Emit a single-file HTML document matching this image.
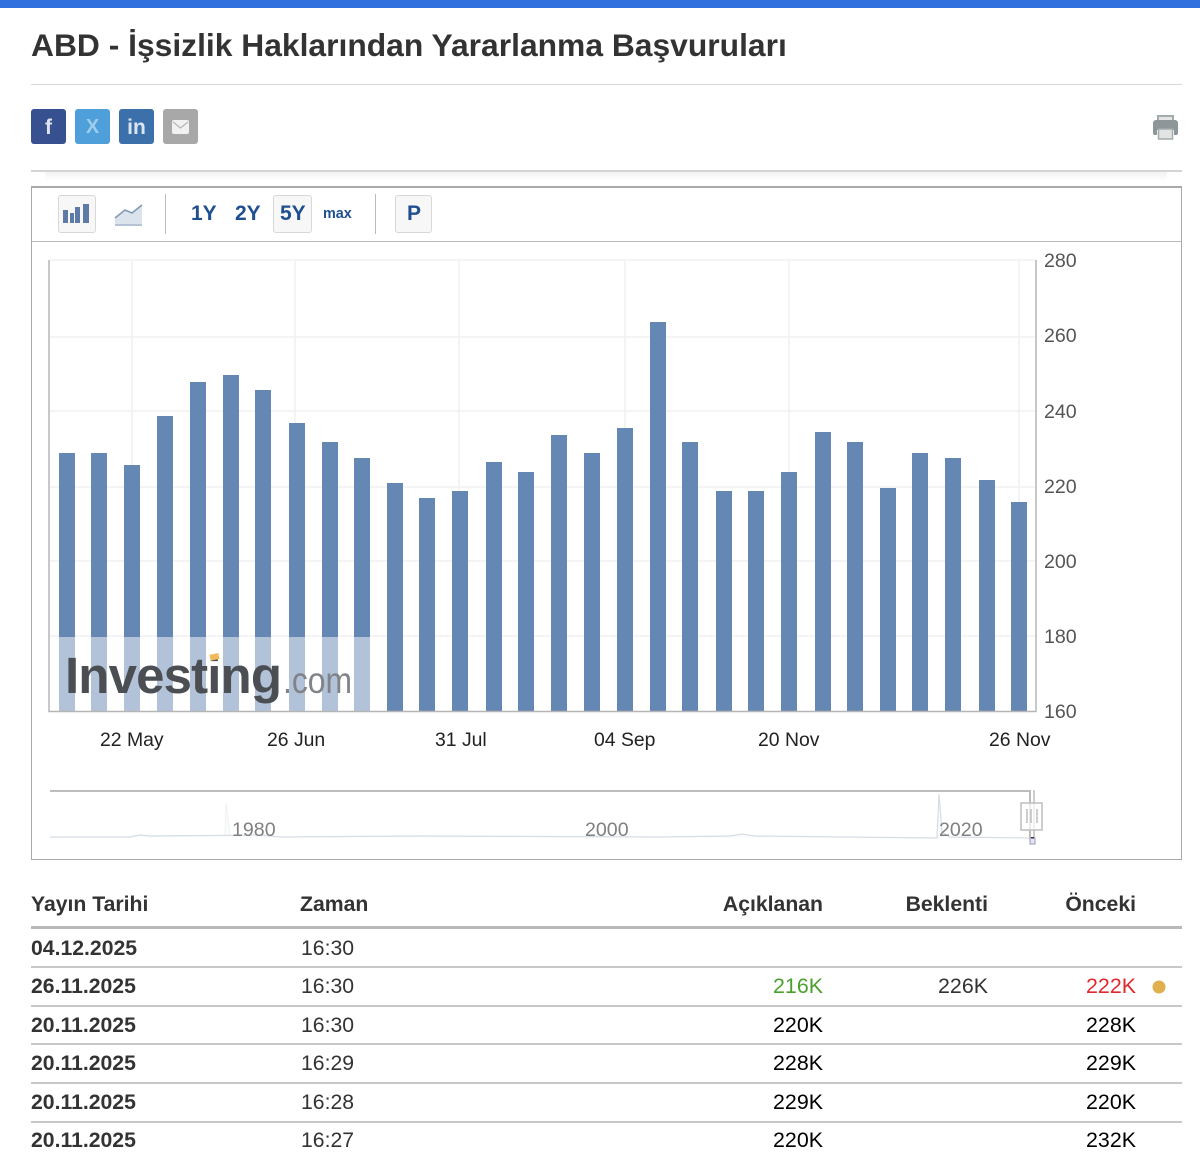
<!DOCTYPE html>
<html lang="tr">
<head>
<meta charset="utf-8">
<title>ABD - İşsizlik Hakları</title>
<style>
html,body{margin:0;padding:0;background:#fff}
body{width:1200px;height:1166px;position:relative;overflow:hidden;font-family:"Liberation Sans",sans-serif;color:#333}
.a{position:absolute;white-space:nowrap}
svg{position:absolute;left:0;top:0}
.d{left:31px;font-weight:bold;font-size:21.2px;line-height:26px;color:#333;margin-top:1px}
.t{left:301px;font-size:21.2px;line-height:26px;color:#333;margin-top:1px}
.r{font-size:21.4px;line-height:26px;text-align:right;color:#000}
.h{font-weight:bold;font-size:21.2px;line-height:26px;color:#333;margin-top:1px}
.ln{position:absolute;left:31px;width:1151px;height:2px;background:#c8c8c8}
.y{left:1044px;font-size:19.6px;line-height:22px;color:#555}
.x{font-size:19.4px;line-height:22px;color:#222}
.tb{font-weight:bold;color:#1f4f8f;font-size:21px;line-height:26px}
.btn{position:absolute;box-sizing:border-box;background:#f7f7f7;border:1px solid #d8d8d8;border-radius:3px}
.soc{position:absolute;top:109px;width:35px;height:35px;border-radius:3px}
</style>
</head>
<body>
<div class="a" style="left:0;top:0;width:1200px;height:8px;background:#2f6fde"></div>
<div class="a" style="left:31px;top:25px;font-size:31.8px;line-height:40px;font-weight:bold;color:#333">ABD - İşsizlik Haklarından Yararlanma Başvuruları</div>
<div class="a" style="left:31px;top:84px;width:1151px;height:1px;background:#d8d8d8"></div>

<div class="soc" style="left:31px;background:#37508f"></div>
<div class="soc" style="left:75px;background:#4f9fdb"></div>
<div class="soc" style="left:119px;background:#3b70aa"></div>
<div class="soc" style="left:163px;background:#a8a8a8"></div>
<div class="a" style="left:31px;top:109px;width:35px;text-align:center;font-size:21px;line-height:38px;font-weight:bold;color:#dfe4f0">f</div>
<div class="a" style="left:75px;top:109px;width:35px;text-align:center;font-size:20px;line-height:37px;font-weight:bold;color:#9fcdee">X</div>
<div class="a" style="left:119px;top:109px;width:35px;text-align:center;font-size:21px;line-height:38px;font-weight:bold;color:#dbe6f2">in</div>

<div class="a" style="left:31px;top:170px;width:1151px;height:2px;background:#d4d4d4"></div>
<div class="a" style="left:45px;top:172px;width:1122px;height:9px;background:linear-gradient(#f2f2f2,#fff)"></div>

<div class="a" style="left:31px;top:186px;width:1149px;height:671px;border:1px solid #aaa;border-top:2px solid #aaa"></div>
<div class="a" style="left:32px;top:241px;width:1149px;height:1px;background:#bbb"></div>

<div class="btn" style="left:58px;top:195px;width:38px;height:38px"></div>
<div class="btn" style="left:273px;top:195px;width:39px;height:38px"></div>
<div class="btn" style="left:395px;top:195px;width:37px;height:38px"></div>
<div class="a" style="left:165px;top:194px;width:1px;height:40px;background:#bbb"></div>
<div class="a" style="left:375px;top:194px;width:1px;height:40px;background:#bbb"></div>

<div class="a tb" style="left:191px;top:201px">1Y</div>
<div class="a tb" style="left:235px;top:201px">2Y</div>
<div class="a tb" style="left:280px;top:201px">5Y</div>
<div class="a" style="left:323px;top:205px;font-size:14.4px;line-height:18px;font-weight:bold;color:#1f4f8f">max</div>
<div class="a tb" style="left:407px;top:201px">P</div>

<svg width="1200" height="1166" viewBox="0 0 1200 1166">
  <!-- envelope -->
  <rect x="172" y="120" width="17" height="14" rx="2" fill="#f1f1f1"/>
  <path d="M173 122 L180.500 128 L188 122" fill="none" stroke="#b5b5b5" stroke-width="1.200"/>
  <!-- printer -->
  <rect x="1158" y="116" width="15" height="8" fill="#e4e6e6" stroke="#a3abad" stroke-width="2"/>
  <path d="M1153 123a3 3 0 0 1 3-3h19a3 3 0 0 1 3 3v10a2 2 0 0 1-2 2h-2v-5h-17v5h-2a2 2 0 0 1-2-2z" fill="#8d9699"/>
  <rect x="1158.500" y="129" width="14" height="10" fill="#e2e4e4" stroke="#a3abad" stroke-width="1.500"/>
  <!-- bar icon -->
  <g fill="#5c7ba6">
    <rect x="63" y="210" width="5" height="13"/>
    <rect x="70" y="213" width="4" height="10"/>
    <rect x="75" y="207" width="5" height="16"/>
    <rect x="83" y="204" width="6" height="19"/>
  </g>
  <!-- line icon -->
  <path d="M115 218 L125 210 L132 213 L142 205 V226 H115 Z" fill="#dbe3ec"/>
  <path d="M115 218 L125 210 L132 213 L142 205" fill="none" stroke="#7f97b5" stroke-width="1.500"/>
  <rect x="115" y="224" width="27" height="2" fill="#b4c3d5"/>

  <!-- gridlines -->
  <g stroke="#f0f1f3" stroke-width="1.500" fill="none">
    <path d="M50 260H1036M50 337H1036M50 411H1036M50 487H1036M50 561H1036M50 636H1036"/>
    <path d="M132 260V711M295 260V711M459 260V711M625 260V711M789 260V711M1019 260V711"/>
  </g>
  <!-- bars -->
  <g fill="#6587b3">
    <rect x="59" y="453" width="16" height="258"/>
    <rect x="91" y="453" width="16" height="258"/>
    <rect x="124" y="465" width="16" height="246"/>
    <rect x="157" y="416" width="16" height="295"/>
    <rect x="190" y="382" width="16" height="329"/>
    <rect x="223" y="375" width="16" height="336"/>
    <rect x="255" y="390" width="16" height="321"/>
    <rect x="289" y="423" width="16" height="288"/>
    <rect x="322" y="442" width="16" height="269"/>
    <rect x="354" y="458" width="16" height="253"/>
    <rect x="387" y="483" width="16" height="228"/>
    <rect x="419" y="498" width="16" height="213"/>
    <rect x="452" y="491" width="16" height="220"/>
    <rect x="486" y="462" width="16" height="249"/>
    <rect x="518" y="472" width="16" height="239"/>
    <rect x="551" y="435" width="16" height="276"/>
    <rect x="584" y="453" width="16" height="258"/>
    <rect x="617" y="428" width="16" height="283"/>
    <rect x="650" y="322" width="16" height="389"/>
    <rect x="682" y="442" width="16" height="269"/>
    <rect x="716" y="491" width="16" height="220"/>
    <rect x="748" y="491" width="16" height="220"/>
    <rect x="781" y="472" width="16" height="239"/>
    <rect x="815" y="432" width="16" height="279"/>
    <rect x="847" y="442" width="16" height="269"/>
    <rect x="880" y="488" width="16" height="223"/>
    <rect x="912" y="453" width="16" height="258"/>
    <rect x="945" y="458" width="16" height="253"/>
    <rect x="979" y="480" width="16" height="231"/>
    <rect x="1011" y="502" width="16" height="209"/>
  </g>
  <rect x="50" y="637" width="337" height="74" fill="#fff" fill-opacity=".5"/>
  <!-- axes -->
  <path d="M49 260V711.500H1036V260" fill="none" stroke="#b5b5b5" stroke-width="1.500"/>

  <!-- watermark -->
  <text x="65" y="693" font-family="Liberation Sans" font-size="51" font-weight="bold" fill="#4b4e52" textLength="217" lengthAdjust="spacing">Investing</text>
  <text x="283" y="693" font-family="Liberation Sans" font-size="37" fill="#808387" textLength="69" lengthAdjust="spacingAndGlyphs">.com</text>
  <rect x="210" y="654" width="9" height="6" fill="#f2b95b" transform="rotate(-12 214 657)"/>

  <!-- navigator -->
  <path d="M225 836 L226 803 L230 836" fill="#fbfcfd" stroke="#eef1f4" stroke-width="1"/>
  <path d="M50 837 L130 837 L140 835 L150 836 L260 835 L280 837 L420 836 L660 837 L730 836 L742 834 L755 836 L937 838 L939 794 L942 832 L950 837 L1032 838" fill="#fafbfd" stroke="#d6dde5" stroke-width="1.200"/>
  <path d="M50 791H1030V838" fill="none" stroke="#bdbdbd" stroke-width="2"/>
  <path d="M1034 790V844" stroke="#bdbdbd" stroke-width="1.500"/>
  <rect x="1021" y="803" width="21" height="27" fill="#fff" fill-opacity=".7" stroke="#bdbdbd" stroke-width="1.500"/>
  <path d="M1027 809V823M1031 809V823M1037 809V823" stroke="#bdbdbd" stroke-width="1.500"/>
  <rect x="1030" y="838" width="5" height="6" fill="#e3e6f2" stroke="#9a9ab8"/>
  <rect x="1031" y="837" width="3" height="1.500" fill="#333"/>
  <circle cx="1159" cy="987" r="6.500" fill="#e0b04f"/>
</svg>

<div class="a y" style="top:250px">280</div>
<div class="a y" style="top:325px">260</div>
<div class="a y" style="top:401px">240</div>
<div class="a y" style="top:476px">220</div>
<div class="a y" style="top:551px">200</div>
<div class="a y" style="top:626px">180</div>
<div class="a y" style="top:701px">160</div>

<div class="a x" style="left:100px;top:729px">22 May</div>
<div class="a x" style="left:267px;top:729px">26 Jun</div>
<div class="a x" style="left:435px;top:729px">31 Jul</div>
<div class="a x" style="left:594px;top:729px">04 Sep</div>
<div class="a x" style="left:758px;top:729px">20 Nov</div>
<div class="a x" style="left:989px;top:729px">26 Nov</div>

<div class="a" style="left:232px;top:819px;font-size:19.6px;line-height:22px;color:#808080">1980</div>
<div class="a" style="left:585px;top:819px;font-size:19.6px;line-height:22px;color:#808080">2000</div>
<div class="a" style="left:939px;top:819px;font-size:19.6px;line-height:22px;color:#808080">2020</div>

<div class="a h" style="left:31px;top:891px">Yayın Tarihi</div>
<div class="a h" style="left:300px;top:891px">Zaman</div>
<div class="a h" style="right:377px;top:891px">Açıklanan</div>
<div class="a h" style="right:212px;top:891px">Beklenti</div>
<div class="a h" style="right:64px;top:891px">Önceki</div>
<div class="a" style="left:31px;top:926px;width:1151px;height:3px;background:#b8b8b8"></div>

<div class="a d" style="top:935px">04.12.2025</div><div class="a t" style="top:935px">16:30</div>
<div class="ln" style="top:966px"></div>

<div class="a d" style="top:973px">26.11.2025</div><div class="a t" style="top:973px">16:30</div>
<div class="a r" style="right:377px;top:973px;color:#4aa02c">216K</div>
<div class="a r" style="right:212px;top:973px;color:#333">226K</div>
<div class="a r" style="right:64px;top:973px;color:#e0282e">222K</div>
<div class="ln" style="top:1005px"></div>

<div class="a d" style="top:1012px">20.11.2025</div><div class="a t" style="top:1012px">16:30</div>
<div class="a r" style="right:377px;top:1012px">220K</div>
<div class="a r" style="right:64px;top:1012px">228K</div>
<div class="ln" style="top:1043px"></div>

<div class="a d" style="top:1050px">20.11.2025</div><div class="a t" style="top:1050px">16:29</div>
<div class="a r" style="right:377px;top:1050px">228K</div>
<div class="a r" style="right:64px;top:1050px">229K</div>
<div class="ln" style="top:1082px"></div>

<div class="a d" style="top:1089px">20.11.2025</div><div class="a t" style="top:1089px">16:28</div>
<div class="a r" style="right:377px;top:1089px">229K</div>
<div class="a r" style="right:64px;top:1089px">220K</div>
<div class="ln" style="top:1121px"></div>

<div class="a d" style="top:1127px">20.11.2025</div><div class="a t" style="top:1127px">16:27</div>
<div class="a r" style="right:377px;top:1127px">220K</div>
<div class="a r" style="right:64px;top:1127px">232K</div>
</body>
</html>
